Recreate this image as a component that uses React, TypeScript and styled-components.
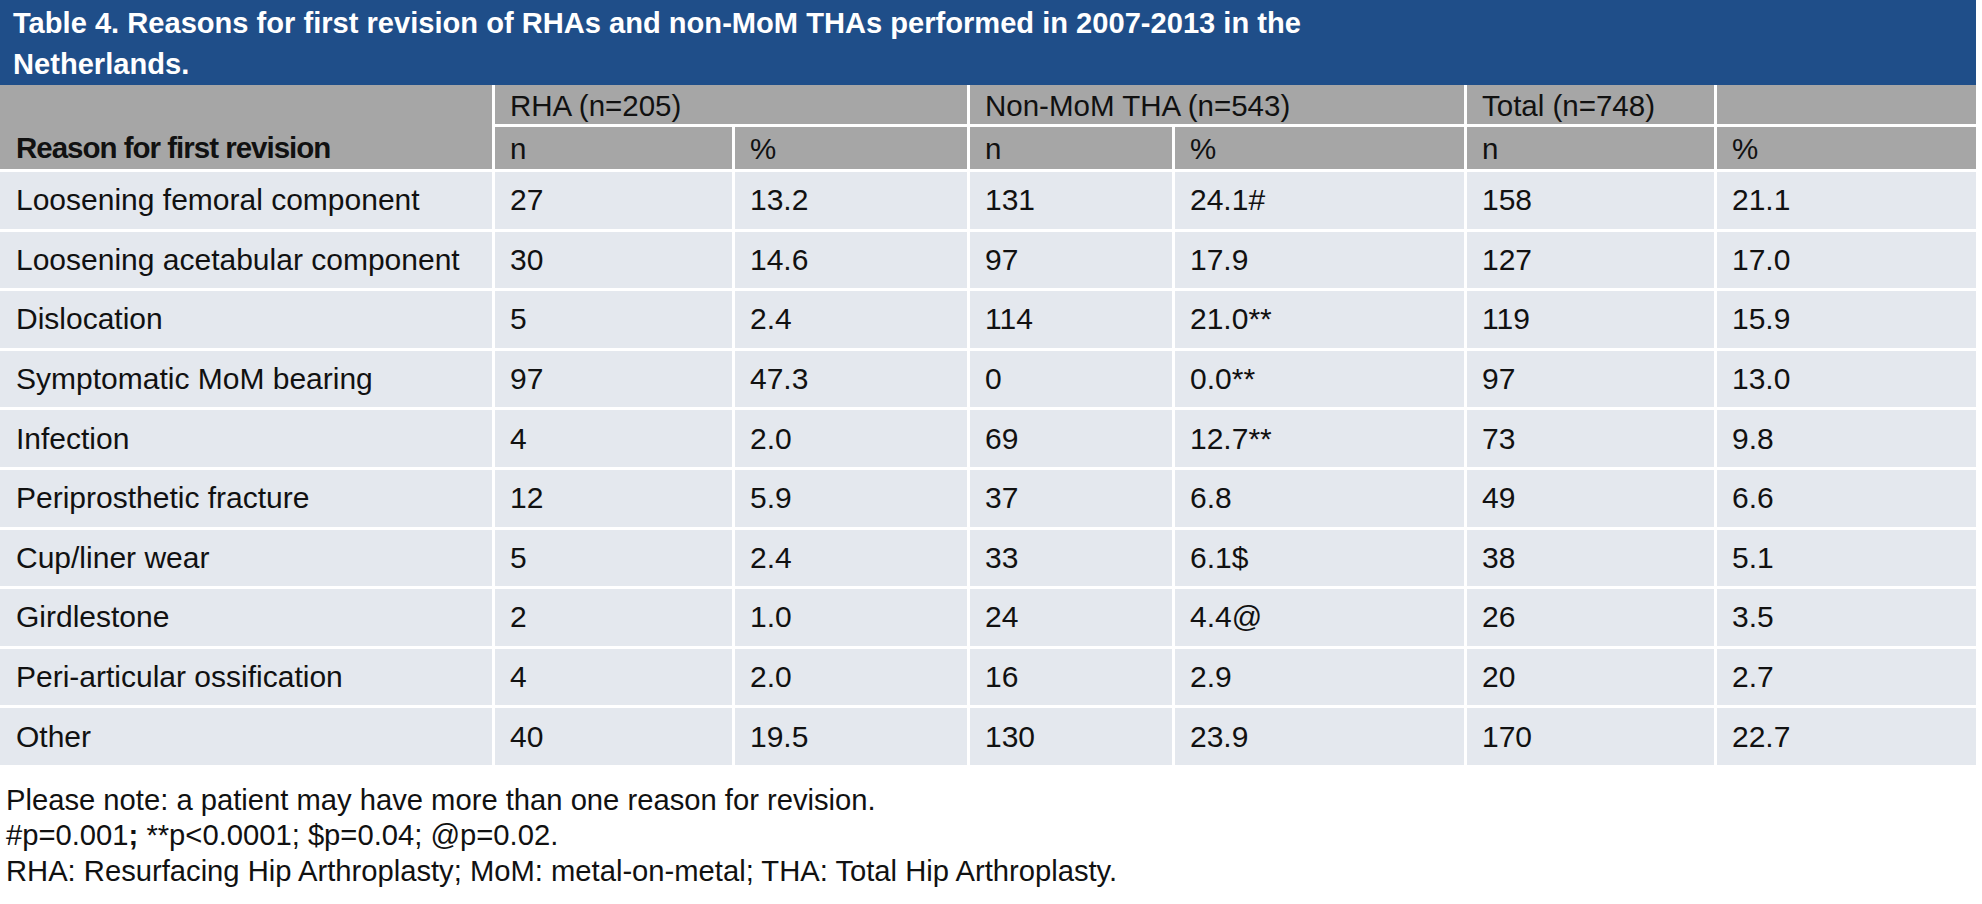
import React from "react";
import styled, { createGlobalStyle } from "styled-components";

const GlobalStyle = createGlobalStyle`
  html, body {
    margin: 0;
    padding: 0;
    background: #ffffff;
  }
  body {
    font-family: "Liberation Sans", Arial, sans-serif;
    color: #111111;
  }
`;

const Page = styled.div`
  width: 1976px;
`;

const TitleBar = styled.div`
  background: #1f4e89;
  height: 85px;
  padding: 3px 13px 0;
  box-sizing: border-box;
`;

const Title = styled.h1`
  max-width: 1420px;
  margin: 0;
  color: #ffffff;
  font-size: 29.1px;
  font-weight: 700;
  line-height: 41px;
`;

const Grid = styled.div`
  display: grid;
  grid-template-columns: 492px 237px 232px 202px 289px 247px 259px;
  grid-template-rows: 39px 42px;
  grid-auto-rows: 56.6px;
  gap: 3px;
  background: #ffffff;
`;

const HeadCell = styled.div<{ $span?: number; $rows?: number; $bold?: boolean }>`
  grid-column: span ${(p) => p.$span ?? 1};
  grid-row: span ${(p) => p.$rows ?? 1};
  background: #a6a6a6;
  display: flex;
  align-items: ${(p) => (p.$rows ? "flex-end" : "center")};
  padding: ${(p) => (p.$rows ? "0 0 4px 16px" : "2px 0 0 15px")};
  font-size: 29.5px;
  font-weight: ${(p) => (p.$bold ? 700 : 400)};
  letter-spacing: ${(p) => (p.$bold ? "-1px" : "0")};
  color: #111111;
  white-space: nowrap;
`;

const Cell = styled.div<{ $first?: boolean }>`
  background: #e4e8ee;
  display: flex;
  align-items: center;
  padding-left: ${(p) => (p.$first ? "16px" : "15px")};
  font-size: 30px;
  color: #111111;
  white-space: nowrap;
`;

const Notes = styled.div`
  padding: 18px 0 0 6px;
  font-size: 29.2px;
  line-height: 35.5px;
  color: #111111;
`;

const rows: string[][] = [
  ["Loosening femoral component", "27", "13.2", "131", "24.1#", "158", "21.1"],
  ["Loosening acetabular component", "30", "14.6", "97", "17.9", "127", "17.0"],
  ["Dislocation", "5", "2.4", "114", "21.0**", "119", "15.9"],
  ["Symptomatic MoM bearing", "97", "47.3", "0", "0.0**", "97", "13.0"],
  ["Infection", "4", "2.0", "69", "12.7**", "73", "9.8"],
  ["Periprosthetic fracture", "12", "5.9", "37", "6.8", "49", "6.6"],
  ["Cup/liner wear", "5", "2.4", "33", "6.1$", "38", "5.1"],
  ["Girdlestone", "2", "1.0", "24", "4.4@", "26", "3.5"],
  ["Peri-articular ossification", "4", "2.0", "16", "2.9", "20", "2.7"],
  ["Other", "40", "19.5", "130", "23.9", "170", "22.7"],
];

function App() {
  return (
    <Page>
      <GlobalStyle />

      <TitleBar>
        <Title>
          Table 4. Reasons for first revision of RHAs and non-MoM THAs performed in 2007-2013 in the Netherlands.
        </Title>
      </TitleBar>

      <Grid>
        <HeadCell $rows={2} $bold>Reason for first revision</HeadCell>
        <HeadCell $span={2}>RHA (n=205)</HeadCell>
        <HeadCell $span={2}>Non-MoM THA (n=543)</HeadCell>
        <HeadCell>Total (n=748)</HeadCell>
        <HeadCell />

        <HeadCell>n</HeadCell>
        <HeadCell>%</HeadCell>
        <HeadCell>n</HeadCell>
        <HeadCell>%</HeadCell>
        <HeadCell>n</HeadCell>
        <HeadCell>%</HeadCell>

        {rows.map((row) =>
          row.map((value, i) => (
            <Cell key={row[0] + i} $first={i === 0}>
              {value}
            </Cell>
          ))
        )}
      </Grid>

      <Notes>
        <div>Please note: a patient may have more than one reason for revision.</div>
        <div>
          #p=0.001<b>;</b> **p&lt;0.0001; $p=0.04; @p=0.02.
        </div>
        <div>RHA: Resurfacing Hip Arthroplasty; MoM: metal-on-metal; THA: Total Hip Arthroplasty.</div>
      </Notes>
    </Page>
  );
}

export default App;
